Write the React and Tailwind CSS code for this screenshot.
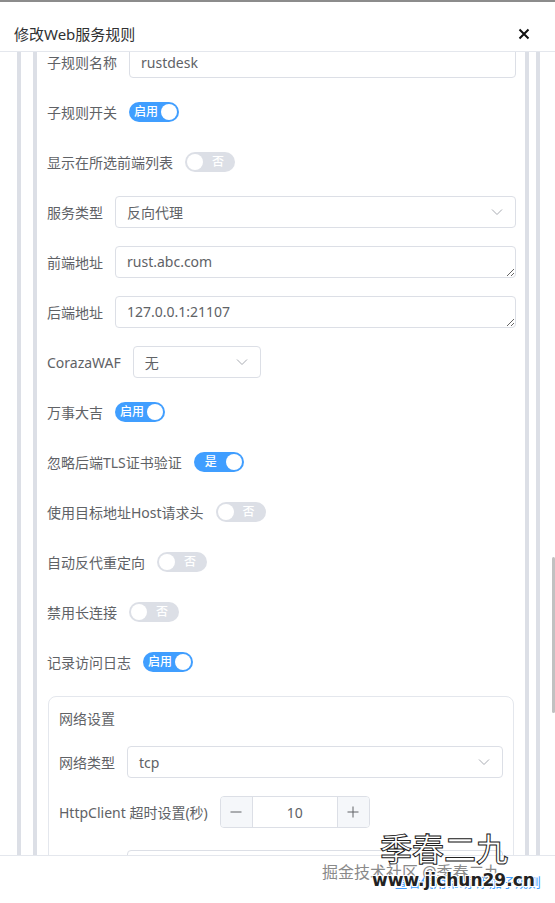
import React from 'react';

function Chevron() {
  return (
    <svg width="12" height="12" viewBox="0 0 12 12" fill="none" className="shrink-0">
      <path d="M1 3.5 L6 8.5 L11 3.5" stroke="#a8abb2" strokeWidth="1" />
    </svg>
  );
}

function Switch({ on, text }) {
  return (
    <div
      className={`flex h-[20px] w-[50px] shrink-0 items-center rounded-full p-[2px] ${
        on ? 'bg-[#409eff]' : 'bg-[#dcdfe6]'
      }`}
    >
      {!on && <span className="h-[16px] w-[16px] shrink-0 rounded-full bg-white" />}
      <span className="flex-1 text-center text-[12px] font-medium leading-[16px] text-white">{text}</span>
      {on && <span className="h-[16px] w-[16px] shrink-0 rounded-full bg-white" />}
    </div>
  );
}

function Row({ label, children, mb = 'mb-[18px]' }) {
  return (
    <div className={`${mb} flex h-[32px] items-center`}>
      <span className="mr-[12px] shrink-0 whitespace-nowrap text-[14px] text-[#606266]">{label}</span>
      {children}
    </div>
  );
}

function Input({ value, className = 'flex-1' }) {
  return (
    <div
      className={`flex h-[32px] items-center rounded-[4px] border border-[#dcdfe6] bg-white px-[11px] text-[14px] text-[#606266] ${className}`}
    >
      {value}
    </div>
  );
}

function Select({ value, className = 'flex-1' }) {
  return (
    <div
      className={`flex h-[32px] items-center justify-between rounded-[4px] border border-[#dcdfe6] bg-white pl-[11px] pr-[12px] text-[14px] text-[#606266] ${className}`}
    >
      <span>{value}</span>
      <Chevron />
    </div>
  );
}

function Area({ value }) {
  return (
    <textarea
      readOnly
      rows={1}
      defaultValue={value}
      className="h-[32px] flex-1 resize-y rounded-[4px] border border-[#dcdfe6] bg-white px-[11px] py-[5px] text-[14px] leading-[20px] text-[#606266] outline-none"
    />
  );
}

function NumberBox({ value }) {
  return (
    <div className="flex h-[32px] w-[150px] overflow-hidden rounded-[4px] border border-[#dcdfe6] bg-white">
      <div className="flex w-[32px] items-center justify-center border-r border-[#dcdfe6] bg-[#f5f7fa]">
        <svg width="12" height="12" viewBox="0 0 12 12">
          <path d="M0.5 6 H11.5" stroke="#606266" strokeWidth="1" />
        </svg>
      </div>
      <div className="flex flex-1 items-center justify-center text-[14px] text-[#606266]">{value}</div>
      <div className="flex w-[32px] items-center justify-center border-l border-[#dcdfe6] bg-[#f5f7fa]">
        <svg width="12" height="12" viewBox="0 0 12 12">
          <path d="M0.5 6 H11.5 M6 0.5 V11.5" stroke="#606266" strokeWidth="1" />
        </svg>
      </div>
    </div>
  );
}

export default function App() {
  return (
    <div className="relative flex h-[903px] w-[555px] flex-col overflow-hidden bg-white font-['Noto_Sans','Noto_Sans_CJK_SC',sans-serif]">
      <header className="flex h-[52px] shrink-0 items-center justify-between border-t-2 border-b border-t-[#8c8c8c] border-b-[#e4e7ed] pl-[14px] pr-[25px] pt-[15px]">
        <span className="text-[15px] text-[#303133]">修改Web服务规则</span>
        <svg width="12" height="12" viewBox="0 0 12 12">
          <path d="M1.5 1.5 L10.5 10.5 M10.5 1.5 L1.5 10.5" stroke="#111" strokeWidth="2" />
        </svg>
      </header>

      <div className="relative flex-1 overflow-hidden">
        <div className="-mt-[6px] ml-[17px] mr-[15px] border-x-4 border-[#dcdfe6]">
          <div className="ml-[12px] mr-[7px] border-x-4 border-[#dcdfe6] pl-[10px] pr-[9px]">
            <Row label="子规则名称">
              <Input value="rustdesk" />
            </Row>
            <Row label="子规则开关">
              <Switch on text="启用" />
            </Row>
            <Row label="显示在所选前端列表">
              <Switch text="否" />
            </Row>
            <Row label="服务类型">
              <Select value="反向代理" />
            </Row>
            <Row label="前端地址">
              <Area value="rust.abc.com" />
            </Row>
            <Row label="后端地址">
              <Area value="127.0.0.1:21107" />
            </Row>
            <Row label="CorazaWAF">
              <Select value="无" className="w-[128px]" />
            </Row>
            <Row label="万事大吉">
              <Switch on text="启用" />
            </Row>
            <Row label="忽略后端TLS证书验证">
              <Switch on text="是" />
            </Row>
            <Row label="使用目标地址Host请求头">
              <Switch text="否" />
            </Row>
            <Row label="自动反代重定向">
              <Switch text="否" />
            </Row>
            <Row label="禁用长连接">
              <Switch text="否" />
            </Row>
            <Row label="记录访问日志">
              <Switch on text="启用" />
            </Row>

            <div className="mt-[1px] ml-[1px] mr-[2px] rounded-[8px] border border-[#e4e7ed] px-[10px] pt-[12px]">
              <div className="mb-[17px] text-[14px] leading-[20px] text-[#606266]">网络设置</div>
              <Row label="网络类型">
                <Select value="tcp" />
              </Row>
              <Row label="HttpClient 超时设置(秒)" mb="mb-[22px]">
                <NumberBox value="10" />
              </Row>
              <Row label="连接超时">
                <Input value="" />
              </Row>
              <Row label="读取超时">
                <Input value="" />
              </Row>
            </div>
          </div>
        </div>
        <div className="absolute right-0 top-[505px] h-[156px] w-[3px] rounded-full bg-[#c1c1c1]" />
      </div>

      <footer className="relative h-[48px] shrink-0 border-t border-[#e4e7ed] bg-white">
        <span className="absolute right-[14px] top-[17px] whitespace-nowrap text-[13px] text-[#409eff]">查看使用帮助 添加子规则</span>
      </footer>

      <span className="pointer-events-none absolute left-[322px] top-[862px] whitespace-nowrap text-[16px] leading-[20px] text-[#8a8a8a] [text-shadow:0_0_2px_#fff]">
        掘金技术社区 @季春二九
      </span>
      <span className="pointer-events-none absolute left-[380px] top-[831px] whitespace-nowrap text-[32px] font-medium leading-[36px] text-white [-webkit-text-stroke:1px_#222]">
        季春二九
      </span>
      <span className="pointer-events-none absolute left-[372px] top-[869px] whitespace-nowrap font-['DejaVu_Sans',sans-serif] text-[17px] font-black leading-[22px] text-[#222] [text-shadow:1px_1px_0_#fff,-1px_-1px_0_#fff,1px_-1px_0_#fff,-1px_1px_0_#fff]">
        www.jichun29.cn
      </span>
    </div>
  );
}
